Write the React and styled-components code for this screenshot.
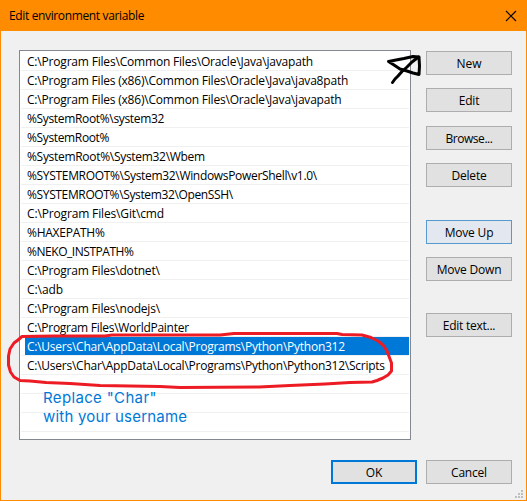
import React from "react";
import styled, { createGlobalStyle } from "styled-components";

const Global = createGlobalStyle`
  *, *::before, *::after { box-sizing: border-box; }
  html, body { margin: 0; padding: 0; overflow: hidden; }
`;

const Dialog = styled.main`
  position: relative;
  display: flex;
  flex-direction: column;
  width: 527px;
  height: 501px;
  border: 1px solid #ff8c00;
  border-top: 0;
  background: #f0f0f0;
  color: #000;
  font-family: "Open Sans", "Noto Sans", sans-serif;
  font-size: 12px;
`;

const TitleBar = styled.header`
  display: flex;
  justify-content: space-between;
  align-items: center;
  flex: none;
  height: 31px;
  padding: 0 9px 0 8px;
  background: #ff8c00;
`;

const Title = styled.h1`
  margin: 0;
  font-size: 12px;
  font-weight: 400;
  letter-spacing: -0.36px;
`;

const CloseButton = styled.button`
  display: flex;
  padding: 0;
  border: 0;
  background: none;
`;

const Content = styled.div`
  display: flex;
  justify-content: space-between;
  height: 409px;
  padding: 19px 14px 0 18px;
`;

const PathList = styled.ul`
  width: 392px;
  height: 390px;
  margin: 0;
  padding: 1px;
  list-style: none;
  border: 1px solid #828790;
  background: #fff;
`;

const PathRow = styled.li`
  height: 19px;
  padding-left: 4px;
  border-bottom: 1px solid #f0f0f0;
`;

const PathText = styled.span`
  display: block;
  height: 18px;
  padding-left: 2px;
  line-height: 19px;
  white-space: pre;
  letter-spacing: ${(p) => p.$track}px;
  color: ${(p) => (p.$selected ? "#fff" : "#000")};
  background: ${(p) => (p.$selected ? "#0078d7" : "transparent")};
`;

const Actions = styled.div`
  display: flex;
  flex-direction: column;
  padding-top: 1px;
`;

const variants = {
  normal: "border: 1px solid #adadad; background: #e1e1e1;",
  focus: "border: 1px solid #569ad0; background: #e3e8f0;",
  primary: "border: 2px solid #0078d7; background: #e1e1e1;",
};

const Button = styled.button`
  display: flex;
  align-items: center;
  justify-content: center;
  flex: none;
  width: 86px;
  height: 24px;
  margin: ${(p) => p.$gap || 0}px 0 0;
  padding: 0;
  ${(p) => variants[p.$variant || "normal"]}
  color: #000;
  font: inherit;
  letter-spacing: ${(p) => p.$track ?? -0.2}px;
`;

const Footer = styled.footer`
  display: flex;
  justify-content: flex-end;
  gap: 9px;
  padding: 20px 14px 0 0;
`;

const Note = styled.p`
  position: absolute;
  left: 42px;
  top: 388px;
  margin: 0;
  color: #0078d7;
  font: 15px/19px Inter, sans-serif;
`;

const NoteLine = styled.span`
  display: block;
  white-space: pre;
  letter-spacing: ${(p) => p.$track}px;
`;

const Markup = styled.svg`
  position: absolute;
  left: -1px;
  top: 0;
  pointer-events: none;
`;

const paths = [
  ["C:\\Program Files\\Common Files\\Oracle\\Java\\javapath", -0.19],
  ["C:\\Program Files (x86)\\Common Files\\Oracle\\Java\\java8path", -0.2],
  ["C:\\Program Files (x86)\\Common Files\\Oracle\\Java\\javapath", -0.2],
  ["%SystemRoot%\\system32", -0.34],
  ["%SystemRoot%", -0.36],
  ["%SystemRoot%\\System32\\Wbem", -0.3],
  ["%SYSTEMROOT%\\System32\\WindowsPowerShell\\v1.0\\", -0.32],
  ["%SYSTEMROOT%\\System32\\OpenSSH\\", -0.36],
  ["C:\\Program Files\\Git\\cmd", -0.15],
  ["%HAXEPATH%", -0.25],
  ["%NEKO_INSTPATH%", -0.46],
  ["C:\\Program Files\\dotnet\\", -0.2],
  ["C:\\adb", -0.05],
  ["C:\\Program Files\\nodejs\\", -0.2],
  ["C:\\Program Files\\WorldPainter", -0.27],
  ["C:\\Users\\Char\\AppData\\Local\\Programs\\Python\\Python312", -0.25, true],
  ["C:\\Users\\Char\\AppData\\Local\\Programs\\Python\\Python312\\Scripts", -0.25],
  ["", 0],
  ["", 0],
  ["", 0],
];

const actions = [
  { label: "New", track: 0 },
  { label: "Edit", gap: 13 },
  { label: "Browse...", gap: 14, track: -0.45 },
  { label: "Delete", gap: 13 },
  { label: "Move Up", gap: 33, variant: "focus" },
  { label: "Move Down", gap: 13 },
  { label: "Edit text...", gap: 32, track: -0.25 },
];

export default function App() {
  return (
    <>
      <Global />
      <Dialog>
        <TitleBar>
          <Title>Edit environment variable</Title>
          <CloseButton aria-label="Close">
            <svg width="12" height="12" viewBox="0 0 12 12">
              <path d="M1 1L11 11M11 1L1 11" stroke="#000" strokeWidth="1.1" />
            </svg>
          </CloseButton>
        </TitleBar>
        <Content>
          <PathList>
            {paths.map(([text, track, selected], i) => (
              <PathRow key={i}>
                <PathText $track={track} $selected={selected}>{text}</PathText>
              </PathRow>
            ))}
          </PathList>
          <Actions>
            {actions.map((a) => (
              <Button key={a.label} $gap={a.gap} $variant={a.variant} $track={a.track}>
                {a.label}
              </Button>
            ))}
          </Actions>
        </Content>
        <Footer>
          <Button $variant="primary">OK</Button>
          <Button>Cancel</Button>
        </Footer>
        <Note>
          <NoteLine $track={0.35}>Replace "Char"</NoteLine>
          <NoteLine $track={0.22}>with your username</NoteLine>
        </Note>
        <Markup width="527" height="501" viewBox="0 0 527 501" fill="none">
          <g stroke="#000" strokeWidth="3" strokeLinecap="round" strokeLinejoin="round">
            <path d="M392.5 82.5L395 79L398 76L402 71.5L407 67L412 62L418.5 57" />
            <path d="M419 57L413 56.5L404 58.5L396 60L388.5 61.5L394 65L400 69L407 71L413 73L419 74.5L419.5 66L419 57" />
          </g>
          <path
            d="M22 336.5L54 336L105 336L112 335L220 335L234 333.5L337 333.5L342 334.5L362 335L371 337.5L378 341L383 345L387 351L390 359L391.5 363L391.5 371L388 375L383 378L377 380.5L372 382L350 382.5L325 384L290 385.5L259 387L180 387.5L160 386.5L100 385.5L70 383.5L46 382.5L30 381L20 380.5L14 377L10.5 372L8.5 365L8.5 356L10 349L14 343L18 340L22 336.5Z"
            stroke="#ed1c24"
            strokeWidth="3"
            strokeLinecap="round"
            strokeLinejoin="round"
          />
          <path
            d="M521 490h2v2h-2zM518 493h2v2h-2zM521 493h2v2h-2zM515 496h2v2h-2zM518 496h2v2h-2zM521 496h2v2h-2z"
            fill="#bfbfbf"
          />
        </Markup>
      </Dialog>
    </>
  );
}
